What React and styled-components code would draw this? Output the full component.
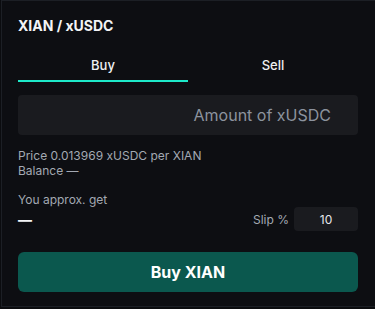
import React, { useState } from 'react';
import styled, { createGlobalStyle } from 'styled-components';

const Global = createGlobalStyle`
  html, body {
    margin: 0;
    padding: 0;
    background: #0b0c0f;
  }
  body {
    font-family: Inter, "Noto Sans", "Liberation Sans", sans-serif;
  }
  * { box-sizing: border-box; }
`;

const Card = styled.div`
  width: 376px;
  height: 307px;
  margin-left: 1px;
  background: #0d0e12;
  border: 1px solid #1c1f25;
  padding: 17px 16px 0 16px;
  display: flex;
  flex-direction: column;
`;

const Title = styled.h2`
  margin: 0;
  font-size: 14px;
  line-height: 16px;
  font-weight: 700;
  color: #f3f4f6;
`;

const Tabs = styled.div`
  display: grid;
  grid-template-columns: 1fr 1fr;
  margin-top: 15px;
  width: 340px;
`;

const Tab = styled.button`
  background: none;
  border: none;
  border-bottom: 2px solid ${({ $active }) => ($active ? '#1de9c9' : 'transparent')};
  color: #eef0f3;
  font-family: inherit;
  font-size: 13px;
  font-weight: 500;
  height: 33px;
  padding: 0;
  cursor: pointer;
`;

const AmountInput = styled.input`
  margin-top: 13px;
  width: 340px;
  height: 40px;
  background: #1a1b1f;
  border: none;
  border-radius: 4px;
  padding: 0 27px 0 12px;
  text-align: right;
  font-family: inherit;
  font-size: 16px;
  color: #e5e7eb;
  outline: none;
  &::placeholder { color: #8c939e; }
`;

const Info = styled.div`
  margin-top: 13px;
  font-size: 12px;
  line-height: 15px;
  color: #a3a9b3;
`;

const Label = styled.div`
  margin-top: 14px;
  font-size: 12px;
  line-height: 15px;
  color: #a3a9b3;
`;

const Row = styled.div`
  display: flex;
  align-items: center;
  justify-content: space-between;
  width: 340px;
`;

const Out = styled.div`
  color: #f3f4f6;
  font-size: 14px;
  font-weight: 700;
`;

const Slip = styled.label`
  display: flex;
  align-items: center;
  gap: 5px;
  font-size: 12px;
  color: #a3a9b3;
`;

const SlipInput = styled.input`
  width: 64px;
  height: 24px;
  background: #1a1b1f;
  border: none;
  border-radius: 4px;
  text-align: center;
  font-family: inherit;
  font-size: 12px;
  color: #e5e7eb;
  outline: none;
`;

const BuyButton = styled.button`
  margin-top: 21px;
  width: 340px;
  height: 40px;
  background: #0b584e;
  border: none;
  border-radius: 6px;
  color: #ffffff;
  font-family: inherit;
  font-size: 16px;
  font-weight: 700;
  cursor: pointer;
`;

export default function App() {
  const [side, setSide] = useState('buy');
  const [slip, setSlip] = useState('10');
  return (
    <>
      <Global />
      <Card>
        <Title>XIAN / xUSDC</Title>
        <Tabs>
          <Tab $active={side === 'buy'} onClick={() => setSide('buy')}>Buy</Tab>
          <Tab $active={side === 'sell'} onClick={() => setSide('sell')}>Sell</Tab>
        </Tabs>
        <AmountInput placeholder="Amount of xUSDC" />
        <Info>
          <div>Price 0.013969 xUSDC per XIAN</div>
          <div>Balance —</div>
        </Info>
        <Label>You approx. get</Label>
        <Row>
          <Out>—</Out>
          <Slip>
            Slip %
            <SlipInput value={slip} onChange={(e) => setSlip(e.target.value)} />
          </Slip>
        </Row>
        <BuyButton>{side === 'buy' ? 'Buy XIAN' : 'Sell XIAN'}</BuyButton>
      </Card>
    </>
  );
}
